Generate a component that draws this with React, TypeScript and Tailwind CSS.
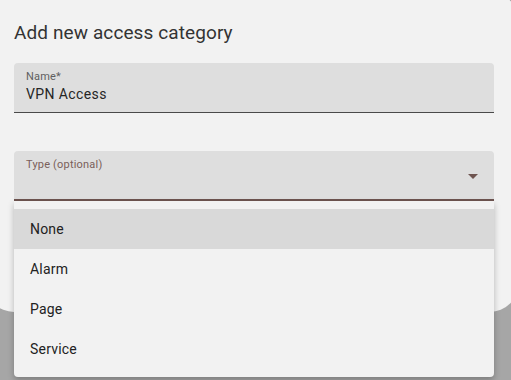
import React from 'react'

const options = ['None', 'Alarm', 'Page', 'Service']

function App() {
  return (
    <div className="relative h-[380px] w-[511px] overflow-hidden bg-[#a6a6a6] font-['Roboto',sans-serif]">
      {/* dialog */}
      <div className="ml-[-14px] mt-[-8px] h-[320px] w-[532px] rounded-[28px] bg-[#f2f2f2] pl-[28px] pr-[24px] pt-[29px]">
        <h2 className="text-[19px] leading-[24px] tracking-[0.1px] text-[#333333]">Add new access category</h2>

        {/* name field */}
        <div className="mt-[18px] h-[50px] rounded-t-[4px] border-b border-[#4a4a4a] bg-[#dedede] px-[12px] pt-[7px]">
          <div className="text-[11px] leading-[14px] tracking-[0.2px] text-[#5f5f5f]">Name*</div>
          <div className="text-[14px] leading-[20px] tracking-[0.4px] text-[#262626]">VPN Access</div>
        </div>

        {/* type select */}
        <div className="relative mt-[38px] h-[50px] rounded-t-[4px] border-b-2 border-[#6e5450] bg-[#dedede] px-[12px] pt-[7px]">
          <div className="text-[11px] leading-[14px] tracking-[0.2px] text-[#7a5f5a]">Type (optional)</div>
          <svg className="absolute right-[16px] top-[23px]" width="10" height="5" viewBox="0 0 10 5">
            <path d="M0 0 L10 0 L5 5 Z" fill="#6e5450" />
          </svg>

          <div className="absolute left-0 right-0 top-[50px] z-10 rounded-b-[4px] bg-[#f2f2f2] py-2 shadow-[0_3px_6px_rgba(0,0,0,0.25)]">
            {options.map((o, i) => (
              <div
                key={o}
                className={
                  i === 0
                    ? 'flex h-[40px] items-center bg-[#d9d9d9] px-[16px] text-[14px] tracking-[0.2px] text-[#222222]'
                    : 'flex h-[40px] items-center px-[16px] text-[14px] tracking-[0.2px] text-[#222222]'
                }
              >
                {o}
              </div>
            ))}
          </div>
        </div>
      </div>
    </div>
  )
}

export default App
